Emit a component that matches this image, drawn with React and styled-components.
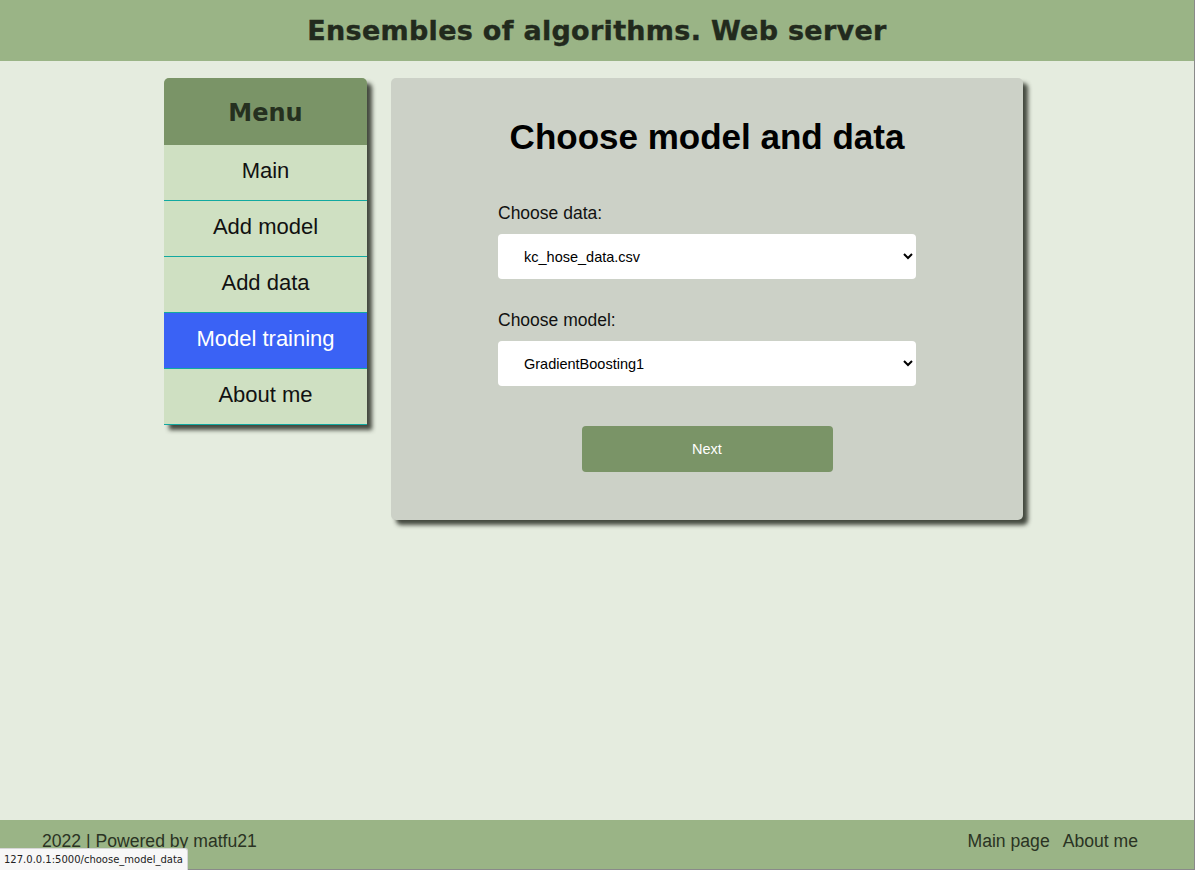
import React from "react";
import styled, { createGlobalStyle } from "styled-components";

const Global = createGlobalStyle`
  html, body { margin: 0; padding: 0; }
  body {
    background: #e5ecdf;
    font-family: "Liberation Sans", Arial, sans-serif;
    color: #000;
  }
  * { box-sizing: border-box; }
`;

const Page = styled.div`
  min-height: 100vh;
  display: flex;
  flex-direction: column;
  border-right: 1px solid #8a8a8a;
`;

const Header = styled.header`
  height: 61px;
  background: #9ab486;
  display: flex;
  align-items: center;
  justify-content: center;
`;

const Title = styled.h1`
  margin: 0;
  font-family: "DejaVu Sans", sans-serif;
  font-weight: 700;
  font-size: 27px;
  letter-spacing: 0.3px;
  color: #222a1d;
  padding-bottom: 1px;
  -webkit-text-stroke: 0.4px #222a1d;
`;

const Main = styled.main`
  flex: 1;
  display: flex;
  align-items: flex-start;
  gap: 24px;
  padding: 17px 0 0 164px;
`;

const Menu = styled.nav`
  width: 203px;
  border-radius: 5px 5px 0 0;
  overflow: hidden;
  box-shadow: 5px 5px 4px rgba(40, 45, 35, 0.85);
  background: #cfe0c2;
`;

const MenuHead = styled.div`
  height: 67px;
  background: #7a9467;
  display: flex;
  align-items: center;
  justify-content: center;
  font-family: "Comic Sans MS", "DejaVu Sans", sans-serif;
  font-weight: 700;
  font-size: 24px;
  color: #25301f;
  padding-top: 2px;
`;

const MenuItem = styled.a`
  display: flex;
  align-items: center;
  justify-content: center;
  height: 56px;
  border-bottom: 1px solid #12a9a0;
  background: ${(p) => (p.$active ? "#3a62f5" : "#cfe0c2")};
  color: ${(p) => (p.$active ? "#ffffff" : "#111")};
  font-size: 22px;
  text-decoration: none;
  padding-bottom: 4px;
`;

const Panel = styled.section`
  width: 632px;
  height: 442px;
  background: #ccd1c7;
  border-radius: 5px;
  box-shadow: 5px 5px 4px rgba(40, 45, 35, 0.85);
  display: flex;
  flex-direction: column;
  align-items: center;
  padding-top: 39px;
`;

const PanelTitle = styled.h2`
  margin: 0 0 46px;
  font-size: 35px;
  font-weight: 700;
  color: #000;
`;

const Form = styled.form`
  width: 418px;
  display: flex;
  flex-direction: column;
`;

const Label = styled.label`
  font-size: 17.5px;
  color: #111;
  margin-bottom: 10px;
`;

const Select = styled.select`
  height: 45px;
  width: 418px;
  border: none;
  border-radius: 4px;
  background-color: #fff;
  font-family: "Liberation Sans", Arial, sans-serif;
  font-size: 14.5px;
  color: #000;
  padding: 0 6px 0 22px;
  margin-bottom: ${(p) => p.$mb || 0}px;
  outline: none;
`;

const Button = styled.button`
  align-self: center;
  margin-top: 40px;
  width: 251px;
  height: 46px;
  border: none;
  border-radius: 4px;
  background: #7a9467;
  color: #fff;
  font-family: "Liberation Sans", Arial, sans-serif;
  font-size: 14.5px;
  cursor: pointer;
`;

const Footer = styled.footer`
  height: 50px;
  background: #9ab486;
  display: flex;
  align-items: center;
  justify-content: space-between;
  padding: 0 56px 6px 42px;
  font-size: 17.6px;
  color: #2a3323;
  border-bottom: 1px solid #8a8a8a;
`;

const FooterLinks = styled.div`
  display: flex;
  gap: 13px;
`;

const FooterLink = styled.a`
  color: #2a3323;
  text-decoration: none;
`;

const StatusBar = styled.div`
  position: fixed;
  left: 0;
  bottom: 0;
  height: 22px;
  padding: 0 4px;
  background: #f7f7f7;
  border: 1px solid #d6d6d6;
  border-left: none;
  border-bottom: none;
  border-radius: 0 3px 0 0;
  font-family: "DejaVu Sans", sans-serif;
  font-size: 10px;
  color: #222;
  display: flex;
  align-items: center;
`;

export default function App() {
  const items = ["Main", "Add model", "Add data", "Model training", "About me"];
  return (
    <>
      <Global />
      <Page>
        <Header>
          <Title>Ensembles of algorithms. Web server</Title>
        </Header>
        <Main>
          <Menu>
            <MenuHead>Menu</MenuHead>
            {items.map((it) => (
              <MenuItem key={it} href="#" $active={it === "Model training"}>
                {it}
              </MenuItem>
            ))}
          </Menu>
          <Panel>
            <PanelTitle>Choose model and data</PanelTitle>
            <Form onSubmit={(e) => e.preventDefault()}>
              <Label>Choose data:</Label>
              <Select $mb={31} defaultValue="kc_hose_data.csv">
                <option>kc_hose_data.csv</option>
              </Select>
              <Label>Choose model:</Label>
              <Select defaultValue="GradientBoosting1">
                <option>GradientBoosting1</option>
              </Select>
              <Button type="submit">Next</Button>
            </Form>
          </Panel>
        </Main>
        <Footer>
          <span>2022 | Powered by matfu21</span>
          <FooterLinks>
            <FooterLink href="#">Main page</FooterLink>
            <FooterLink href="#">About me</FooterLink>
          </FooterLinks>
        </Footer>
      </Page>
      <StatusBar>127.0.0.1:5000/choose_model_data</StatusBar>
    </>
  );
}
